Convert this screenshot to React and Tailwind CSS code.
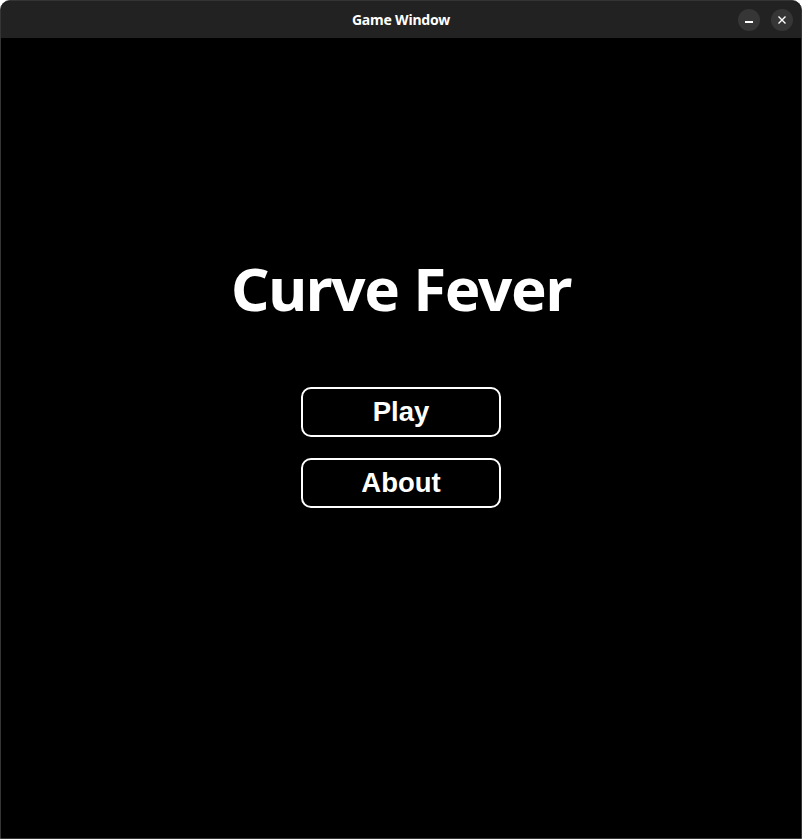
export default function App() {
  return (
    <div className="w-[802px] h-[839px] bg-black flex flex-col overflow-hidden rounded-t-[10px] border border-[#353535]" style={{fontFamily: '"Noto Sans", sans-serif'}}>
      <div className="h-[37px] shrink-0 bg-[#222222] flex items-center relative">
        <div className="flex-1 text-center text-white text-[14px] font-bold tracking-[-0.2px]">Game Window</div>
        <div className="absolute right-[8px] top-[8px] flex gap-[11px]">
          <div className="w-[22px] h-[22px] rounded-full bg-[#363636] flex items-center justify-center">
            <div className="w-[8px] h-[1.5px] bg-white mt-[4px]"></div>
          </div>
          <div className="w-[22px] h-[22px] rounded-full bg-[#363636] flex items-center justify-center">
            <svg width="10" height="10" viewBox="0 0 10 10"><path d="M1.5 1.5L8.5 8.5M8.5 1.5L1.5 8.5" stroke="white" strokeWidth="1.4" /></svg>
          </div>
        </div>
      </div>
      <div className="flex-1 flex flex-col items-center">
        <div className="mt-[220px] text-white font-bold text-[60px] leading-none tracking-[-1.3px]">Curve Fever</div>
        <div className="mt-[69px] flex flex-col gap-[21px]" style={{fontFamily: '"Liberation Sans", Arial, sans-serif'}}>
          <div className="w-[200px] h-[50px] border-2 border-white rounded-[10px] flex items-center justify-center text-white font-bold text-[27.5px]">Play</div>
          <div className="w-[200px] h-[50px] border-2 border-white rounded-[10px] flex items-center justify-center text-white font-bold text-[27.5px]">About</div>
        </div>
      </div>
    </div>
  );
}
